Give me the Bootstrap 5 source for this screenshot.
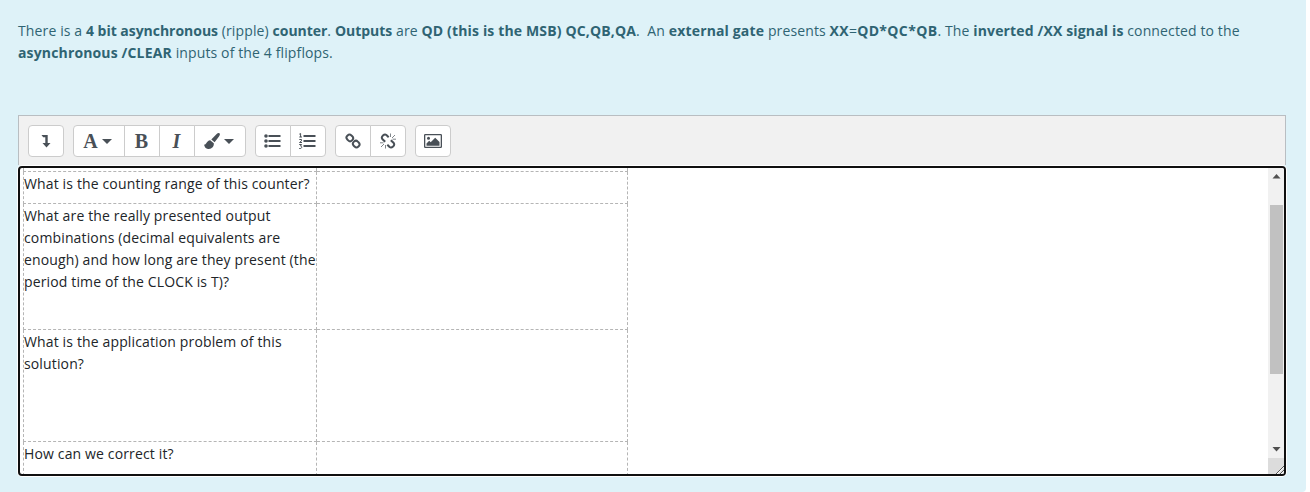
<!DOCTYPE html>
<html lang="en">
<head>
  <meta charset="UTF-8">
  <meta name="viewport" content="width=device-width, initial-scale=1">
  <title>Asynchronous counter</title>
  <link href="https://cdn.jsdelivr.net/npm/bootstrap@5.3.0/dist/css/bootstrap.min.css" rel="stylesheet">
  <style>
    body {
      font-family: "Open Sans", "Noto Sans", sans-serif;
      font-size: 14px;
      line-height: 22px;
      letter-spacing: .125px;
      background: #fff;
    }
    .question {
      width: 1306px;
      height: 492px;
      padding: 20px 20px 16px 18px;
      background: #def2f8;
      color: #2f6473;
      border-bottom-right-radius: 4px;
    }
    .question-text { height: 95px; white-space: nowrap; }
    .question-text b { letter-spacing: .15px; }
    .question-text .term { letter-spacing: -.03px; }
    .question-text .formula { letter-spacing: .36px; }
    .editor-toolbar {
      height: 50px;
      padding: 9px;
      gap: 9px;
      background: #f1f1f1;
      border: 1px solid #b9bec2;
      border-bottom: 0;
    }
    .editor-toolbar .btn {
      width: 36px;
      height: 32px;
      padding: 0 1px 0 0;
      color: #495057;
      background: #fff;
      border-color: #ccc;
      border-radius: 4px;
    }
    .editor-toolbar .btn-wide { width: 52px; padding-right: 3px; }
    .editor-toolbar svg { display: block; fill: currentColor; }
    .serif-icon {
      font: bold 20px/20px "Liberation Serif", serif;
      letter-spacing: 0;
    }
    .editor-content {
      height: 310px;
      margin-top: 1px;
      color: #212529;
      background: #fff;
      border: 2px solid #101010;
      border-radius: 4px;
      box-shadow: 0 0 0 1px #fff;
    }
    .answers {
      width: 605px;
      margin-left: 3px;
      table-layout: fixed;
      border-collapse: collapse;
      white-space: nowrap;
      letter-spacing: .14px;
    }
    .answers td {
      padding: 1px 0 0;
      border: 1px dashed #b5b5b5;
      vertical-align: top;
    }
    .answers .row-cut td { border-top: 0; padding: 0; height: 3px; }
    .scroll-track { width: 16px; background: #f1f1f1; }
    .scroll-track svg { display: block; }
    .scroll-thumb { width: 13px; height: 169px; margin-left: 2px; background: #c1c1c1; }
  </style>
</head>
<body>
  <main class="question">
    <div class="question-text">
      <div>There is a <b class="term">4 bit asynchronous</b> (ripple) <b class="term">counter</b>. <b class="term">Outputs</b> are <b>QD (this is the MSB) QC,QB,QA</b>.&nbsp; An <b>external gate</b> presents <b class="formula">XX</b>=<b class="formula">QD*QC*QB</b>. The <b>inverted /XX signal is</b> connected to the</div>
      <div><b>asynchronous /CLEAR</b> inputs of the 4 flipflops.</div>
    </div>

    <div class="editor-toolbar d-flex">
      <button class="btn d-flex align-items-center justify-content-center" aria-label="Show more">
        <svg width="14" height="14" viewBox="0 0 14 14"><path d="M2.5 1H8.7V9H11.5L7.5 13.5L3.5 9H6.3V3.2H4.2Z"/></svg>
      </button>
      <div class="btn-group">
        <button class="btn btn-wide d-flex align-items-center justify-content-center" aria-label="Paragraph styles">
          <span class="serif-icon">A</span>
          <svg class="ms-1" width="10" height="5" viewBox="0 0 10 5"><path d="M0 0H10L5 5Z"/></svg>
        </button>
        <button class="btn d-flex align-items-center justify-content-center" aria-label="Bold"><span class="serif-icon">B</span></button>
        <button class="btn d-flex align-items-center justify-content-center" aria-label="Italic"><span class="serif-icon fst-italic">I</span></button>
        <button class="btn btn-wide d-flex align-items-center justify-content-center" aria-label="Font colour">
          <svg width="16" height="16" viewBox="0 0 16 16"><path d="M15.6 .4C16.4 1.4 15.6 2.6 14.8 3.7L10.6 9.2L7.3 6.5L12.4 1.3C13.6 .2 14.8-.3 15.6 .4ZM6.2 7.3L9.8 10.3C10.2 14.2 6.8 16 4 16C1.8 16 .6 14.4 0 11.6C2.4 12.4 2 7.9 6.2 7.3Z"/></svg>
          <svg class="ms-1" width="10" height="5" viewBox="0 0 10 5"><path d="M0 0H10L5 5Z"/></svg>
        </button>
      </div>
      <div class="btn-group">
        <button class="btn d-flex align-items-center justify-content-center" aria-label="Unordered list">
          <svg width="17" height="14" viewBox="0 0 17 14"><path d="M4.5 1H16.5V3H4.5ZM4.5 6H16.5V8H4.5ZM4.5 11H16.5V13H4.5Z"/><circle cx="2" cy="2" r="1.8"/><circle cx="2" cy="7" r="1.8"/><circle cx="2" cy="12" r="1.8"/></svg>
        </button>
        <button class="btn d-flex align-items-center justify-content-center" aria-label="Ordered list">
          <svg width="17" height="16" viewBox="0 0 17 16"><path d="M4.5 2H16.5V4H4.5ZM4.5 7H16.5V9H4.5ZM4.5 12H16.5V14H4.5Z"/><path d="M.3 1.2L1.6.5V4M.3 4H3M.3 6.5H2.5V7.8L.5 9.5H3M.2 11.5H2.6L1.5 13C3.3 13 3 15.5 1.4 15.5H.2" fill="none" stroke="currentColor"/></svg>
        </button>
      </div>
      <div class="btn-group">
        <button class="btn d-flex align-items-center justify-content-center" aria-label="Link">
          <svg width="16" height="16" viewBox="0 0 16 16"><g fill="none" stroke="currentColor" stroke-width="2"><rect x="1.5" y="2" width="6.6" height="5.8" rx="2.7" transform="rotate(45 4.8 4.9)"/><rect x="7.9" y="8.2" width="6.6" height="5.8" rx="2.7" transform="rotate(45 11.2 11.1)"/></g></svg>
        </button>
        <button class="btn d-flex align-items-center justify-content-center" aria-label="Unlink">
          <svg width="16" height="16" viewBox="0 0 16 16"><g fill="none" stroke="currentColor"><path stroke-width="2" d="M8.7 4.3L6.4 2C4.4 .4 .6 3.4 2.3 6L5.2 8.8M7.3 11.7L9.6 14C11.6 15.6 15.4 12.6 13.7 10L10.8 7.2"/><path stroke-width=".7" d="M10.5 4V.5M12 5L15 2M12.5 6.2H16M5.5 12V15.5M4 11L1 14M3.5 9.8H0"/></g></svg>
        </button>
      </div>
      <button class="btn d-flex align-items-center justify-content-center" aria-label="Image">
        <svg width="18" height="14" viewBox="0 0 18 14"><path fill-rule="evenodd" d="M1.3 0H16.7Q18 0 18 1.3V12.7Q18 14 16.7 14H1.3Q0 14 0 12.7V1.3Q0 0 1.3 0ZM1.3 1.3V12.7H16.7V1.3Z"/><circle cx="4.5" cy="4.3" r="1.5"/><path d="M2.5 11.7V9.5L5.2 6.8L6.7 8.3L11.2 3.8L15.5 8V11.7Z"/></svg>
      </button>
    </div>

    <div class="editor-content d-flex justify-content-between overflow-hidden">
      <div>
        <table class="answers">
          <colgroup><col style="width: 293px"><col style="width: 311px"></colgroup>
          <tr class="row-cut"><td></td><td></td></tr>
          <tr style="height: 32px"><td>What is the counting range of this counter?</td><td></td></tr>
          <tr style="height: 126px"><td>What are the really presented output<br>combinations (decimal equivalents are<br>enough) and how long are they present (the<br>period time of the CLOCK is T)?</td><td></td></tr>
          <tr style="height: 112px"><td>What is the application problem of this<br>solution?</td><td></td></tr>
          <tr style="height: 60px"><td>How can we correct it?</td><td></td></tr>
        </table>
      </div>
      <div class="scroll-track d-flex flex-column">
        <svg width="16" height="37" viewBox="0 0 16 37"><path d="M4.5 10.5L8.5 6L12.5 10.5Z" fill="#505050"/></svg>
        <div class="scroll-thumb"></div>
        <svg class="mt-auto" width="16" height="32" viewBox="0 0 16 32"><path d="M4.5 5L8.5 9.5L12.5 5Z" fill="#505050"/><path d="M0 16H16V32H0Z" fill="#dcdcdc"/><path d="M8 32L16 24M12 32L16 28" stroke="#555" fill="none"/><path d="M9.2 32L16 25.2M13.2 32L16 29.2" stroke="#fff" fill="none"/></svg>
      </div>
    </div>
  </main>
  <script src="https://cdn.jsdelivr.net/npm/bootstrap@5.3.0/dist/js/bootstrap.bundle.min.js"></script>
</body>
</html>
